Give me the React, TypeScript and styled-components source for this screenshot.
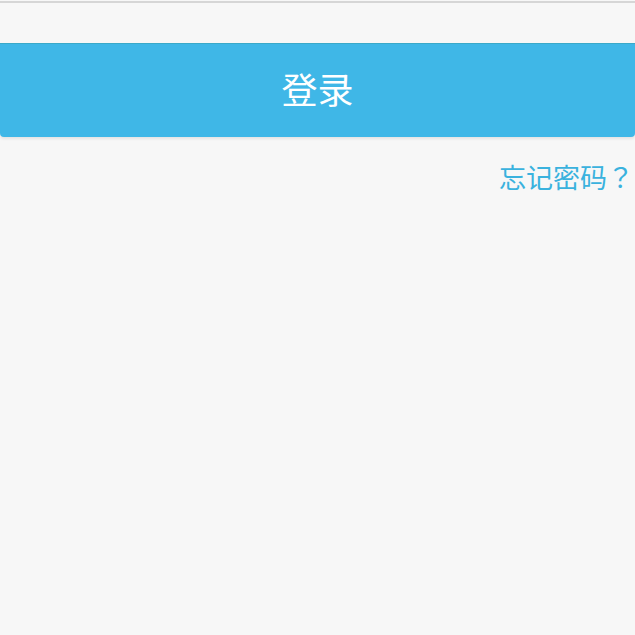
import styled, { createGlobalStyle } from "styled-components";

const GlobalStyle = createGlobalStyle`
  html, body {
    margin: 0;
    padding: 0;
    background: #f7f7f7;
  }
  body {
    font-family: "Noto Sans CJK SC", "Noto Sans", sans-serif;
  }
`;

const Page = styled.div`
  width: 635px;
  height: 635px;
  background: #f7f7f7;
  display: flex;
  flex-direction: column;
`;

const TopRule = styled.div`
  height: 2px;
  margin-top: 1px;
  background: #d6d6d6;
`;

const LoginButton = styled.button`
  margin-top: 40px;
  height: 94px;
  width: 100%;
  border: none;
  border-top: 1px solid #3aa9c9;
  border-radius: 0 0 4px 4px;
  background: #3fb7e7;
  box-shadow: 0 2px 3px rgba(0, 0, 0, 0.08);
  color: #ffffff;
  font-family: "Noto Sans CJK SC", sans-serif;
  font-size: 36px;
  line-height: 1;
  display: flex;
  align-items: center;
  justify-content: center;
  padding: 0 0 6px 0;
`;

const LinkRow = styled.div`
  display: flex;
  justify-content: flex-end;
  padding: 24px 1px 0 0;
`;

const ForgotLink = styled.a`
  color: #3ab2de;
  font-family: "Noto Sans CJK JP", "Noto Sans CJK SC", sans-serif;
  font-size: 27px;
  line-height: 32px;
  text-decoration: none;
`;

export default function App() {
  return (
    <Page>
      <GlobalStyle />
      <TopRule />
      <LoginButton>登录</LoginButton>
      <LinkRow>
        <ForgotLink href="#">忘记密码？</ForgotLink>
      </LinkRow>
    </Page>
  );
}
